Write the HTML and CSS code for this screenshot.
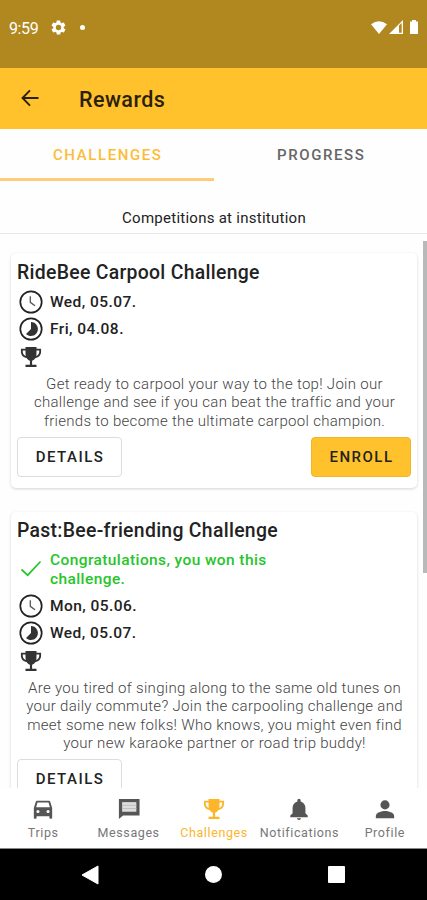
FILE: index.html
```html
<!DOCTYPE html>
<html lang="en">

<head>
  <meta charset="UTF-8">
  <title>Rewards</title>
  <link rel="stylesheet" href="styles.css">
</head>

<body>
  <!-- Shared icons -->
  <svg class="symbols">
    <symbol id="clock" viewBox="0 0 24 24">
      <circle cx="12" cy="12" r="10.7" fill="none" stroke="#222" stroke-width="1.7" />
      <path d="M11.3 6.3v6l4.7 3.5" fill="none" stroke="#555" stroke-width="1.3" />
    </symbol>
    <symbol id="timelapse" viewBox="0 0 24 24">
      <circle cx="12" cy="12" r="10.7" fill="none" stroke="#222" stroke-width="1.7" />
      <path d="M12 5a7 7 0 1 1-5 12L12 12z" fill="#333" />
    </symbol>
    <symbol id="trophy" viewBox="0 0 24 24">
      <path d="M6 1h12v2h5v3c0 4-2.500 6.500-6.200 7.200-1 1.500-2.200 2.500-3.600 2.800v4.500H18V23H6v-2.500h4.800V16c-1.400-.3-2.600-1.300-3.600-2.800C3.500 12.500 1 10 1 6V3h5zM6 5H3v1c0 2.400 1.200 4.100 3.300 4.900C6 9.500 6 7 6 5zM18 5c0 2 0 4.500-.3 5.900C19.800 10.100 21 8.400 21 6V5z" fill="currentColor" />
    </symbol>
  </svg>

  <div class="status-bar">
    <span class="time">9:59</span>
    <svg class="gear" viewBox="0 0 24 24"><path fill="#fff" fill-rule="evenodd" d="M19.400 13a7.500 7.500 0 0 0 0-2l2.100-1.600c.2-.2.200-.4.100-.6l-2-3.500c-.1-.2-.4-.3-.6-.2l-2.500 1a7 7 0 0 0-1.700-1l-.4-2.600A.5.500 0 0 0 14 2h-4c-.3 0-.5.200-.5.400l-.4 2.700a8 8 0 0 0-1.700 1l-2.500-1c-.2-.1-.5 0-.6.200l-2 3.500c-.1.200-.1.500.1.600L4.600 11a8 8 0 0 0 0 2l-2.200 1.600c-.2.200-.2.400-.1.600l2 3.500c.1.200.4.300.6.200l2.500-1a7 7 0 0 0 1.700 1l.4 2.700c0 .2.200.4.500.4h4c.3 0 .5-.2.500-.4l.4-2.700a8 8 0 0 0 1.700-1l2.500 1c.2.100.5 0 .6-.2l2-3.500c.1-.2.100-.5-.1-.6zM12 15.800a3.800 3.800 0 1 1 0-7.600 3.800 3.800 0 0 1 0 7.600z" /></svg>
    <span class="dot"></span>
    <svg class="signals" viewBox="0 0 49 16" fill="#fff">
      <path d="M0 4.200Q8 -1.800 16 4.200L8 14z" />
      <path fill-rule="evenodd" d="M18 14L32 0v14zM28 5.500V12.800h2.700V3z" />
      <path d="M39 1.500h2V0h4v1.500h2V14h-8z" />
    </svg>
  </div>

  <div class="app-bar">
    <svg class="back" viewBox="0 0 18 18"><path d="M17.500 9H1.500M9 1.300L1.500 9 9 16.700" fill="none" stroke="#2b2108" stroke-width="1.900" /></svg>
    <h1>Rewards</h1>
  </div>

  <div class="tabs">
    <div class="tab active">CHALLENGES</div>
    <div class="tab">PROGRESS</div>
  </div>

  <h2 class="heading">Competitions at institution</h2>

  <div class="content">
    <div class="card">
      <h3>RideBee Carpool Challenge</h3>
      <div class="row"><svg><use href="#clock" /></svg><span>Wed, 05.07.</span></div>
      <div class="row"><svg><use href="#timelapse" /></svg><span>Fri, 04.08.</span></div>
      <div class="row prize"><svg><use href="#trophy" /></svg></div>
      <p>Get ready to carpool your way to the top! Join our<br>challenge and see if you can beat the traffic and your<br>friends to become the ultimate carpool champion.</p>
      <div class="actions">
        <button>DETAILS</button>
        <button class="primary">ENROLL</button>
      </div>
    </div>

    <div class="card">
      <h3>Past:Bee-friending Challenge</h3>
      <div class="row won">
        <svg viewBox="0 0 24 24"><path d="M2.500 12.500l6.200 5.700L21.500 4.500" fill="none" stroke="#27c52b" stroke-width="1.700" /></svg>
        <span>Congratulations, you won this<br>challenge.</span>
      </div>
      <div class="row"><svg><use href="#clock" /></svg><span>Mon, 05.06.</span></div>
      <div class="row"><svg><use href="#timelapse" /></svg><span>Wed, 05.07.</span></div>
      <div class="row prize"><svg><use href="#trophy" /></svg></div>
      <p>Are you tired of singing along to the same old tunes on<br>your daily commute? Join the carpooling challenge and<br>meet some new folks! Who knows, you might even find<br>your new karaoke partner or road trip buddy!</p>
      <div class="actions">
        <button>DETAILS</button>
      </div>
    </div>
    <div class="scrollbar"></div>
  </div>

  <div class="bottom-nav">
    <div class="item">
      <svg viewBox="0 0 24 24"><path fill="currentColor" fill-rule="evenodd" d="M5.500 3h13c.7 0 1.200.4 1.400 1L22 11v10.500c0 .6-.4 1-1 1h-1c-.6 0-1-.4-1-1V20H5v1.500c0 .6-.4 1-1 1H3c-.6 0-1-.4-1-1V11l2.100-7c.2-.6.700-1 1.400-1zM6 5l-1.500 5h15L18 5zM6.500 13a1.700 1.700 0 1 0 0 3.400 1.700 1.700 0 0 0 0-3.400zm11 0a1.700 1.700 0 1 0 0 3.400 1.700 1.700 0 0 0 0-3.400z" /></svg>
      <span>Trips</span>
    </div>
    <div class="item">
      <svg viewBox="0 0 24 24"><path d="M1 23V1h22.500v18H5.500z" fill="currentColor" /><path d="M4.500 4.500h15.500v10.500h-15.500z" fill="#ddd" /><path d="M4.500 8h15.500M4.500 11.500h15.500" stroke="#bbb" /></svg>
      <span>Messages</span>
    </div>
    <div class="item active">
      <svg><use href="#trophy" /></svg>
      <span>Challenges</span>
    </div>
    <div class="item">
      <svg viewBox="0 0 24 24"><path fill="currentColor" d="M12 24a2.300 2.300 0 0 0 2.300-2H9.700A2.300 2.300 0 0 0 12 24zM19 16.500V11c0-3.600-1.800-6.500-5.200-7.300V2.500a1.800 1.800 0 0 0-3.600 0v1.200C6.800 4.500 5 7.400 5 11v5.500L2.500 19v2h19v-2z" /></svg>
      <span>Notifications</span>
    </div>
    <div class="item">
      <svg viewBox="0 0 24 24"><circle cx="12" cy="7.500" r="5" fill="currentColor" /><path d="M2 22v-2.500C2 16 8.500 14.300 12 14.300S22 16 22 19.500V22z" fill="currentColor" /></svg>
      <span>Profile</span>
    </div>
  </div>

  <div class="system-nav">
    <svg viewBox="0 0 18 20"><path d="M17 1v18L1 10z" fill="#fff" stroke="#fff" stroke-linejoin="round" /></svg>
    <div class="home"></div>
    <div class="recent"></div>
  </div>
</body>

</html>
```

FILE: styles.css
```css
* {
  box-sizing: border-box;
}

body {
  margin: 0;
  height: 900px;
  display: flex;
  flex-direction: column;
  overflow: hidden;
  background: #fefefe;
  color: #222;
  font-family: Roboto, sans-serif;
  white-space: nowrap;
}

h1,
h2,
h3,
p {
  margin: 0;
}

.symbols {
  display: none;
}

.status-bar {
  height: 68px;
  flex: none;
  display: flex;
  align-items: center;
  padding: 0 7px 13px 9px;
  background: #b18820;
  color: #fff;
}

.time {
  width: 41px;
  padding-top: 1px;
  font-size: 16px;
  letter-spacing: -0.4px;
}

.gear {
  width: 17px;
  height: 17px;
}

.dot {
  width: 5px;
  height: 5px;
  margin-left: 13px;
  border-radius: 50%;
  background: #fff;
}

.signals {
  width: 49px;
  height: 16px;
  margin-left: auto;
}

.app-bar {
  height: 61px;
  flex: none;
  display: flex;
  align-items: center;
  padding-left: 21px;
  background: #ffc22c;
}

.back {
  width: 18px;
  height: 18px;
  margin-bottom: 2px;
}

h1 {
  margin-left: 40px;
  padding-top: 1px;
  color: #2b2108;
  font-size: 21.500px;
  font-weight: 500;
  letter-spacing: 0.45px;
}

.tabs {
  height: 52px;
  flex: none;
  display: flex;
}

.tab {
  flex: 1;
  border-bottom: 3px solid transparent;
  padding-left: 2px;
  color: #666;
  font-size: 15px;
  font-weight: 500;
  letter-spacing: 1.6px;
  line-height: 53px;
  text-align: center;
}

.tab.active {
  border-color: #ffca7c;
  color: #fbbd38;
}

.heading {
  height: 53px;
  flex: none;
  padding: 28px 0 0 1px;
  border-bottom: 1px solid #e8e8e8;
  font-size: 15px;
  font-weight: 400;
  letter-spacing: 0.26px;
  line-height: 18px;
  text-align: center;
}

.content {
  position: relative;
  flex: 1;
  min-height: 0;
  overflow: hidden;
  padding: 19px 10px 0 11px;
}

.card {
  height: 235px;
  margin-bottom: 24px;
  padding: 8px 6px;
  border-radius: 5px;
  background: #fff;
  box-shadow: 0 1px 3px rgba(0, 0, 0, 0.17);
}

.card + .card {
  height: 300px;
  padding-top: 7px;
}

h3 {
  font-size: 19.400px;
  font-weight: 500;
  letter-spacing: 0.3px;
  line-height: 24px;
  margin-bottom: 3px;
}

.row {
  height: 27.500px;
  display: flex;
  align-items: center;
  gap: 7px;
  padding-left: 2px;
  font-size: 15.500px;
  font-weight: 500;
  letter-spacing: 0.45px;
  line-height: 19px;
}

.row span {
  padding-top: 1px;
}

.row svg {
  width: 24px;
  height: 24px;
}

.row.prize {
  height: 27px;
  padding-left: 3px;
  color: #333;
}

.row.prize svg {
  width: 22px;
  height: 22px;
}

.row.won {
  height: 46px;
  letter-spacing: 0.4px;
  color: #27c52b;
}

p {
  padding: 5px 0 0 1px;
  color: #444;
  font-size: 15px;
  font-weight: 300;
  letter-spacing: 0.3px;
  line-height: 18.300px;
  text-align: center;
}

.actions {
  display: flex;
  justify-content: space-between;
  padding-top: 7px;
}

button {
  width: 105px;
  height: 40px;
  padding: 0 0 0 1px;
  border: 1px solid #ddd;
  border-radius: 4px;
  background: #fff;
  color: #222;
  font-family: inherit;
  font-size: 15px;
  font-weight: 500;
  letter-spacing: 1.500px;
}

button.primary {
  width: 100px;
  border-color: #f0b52b;
  background: #ffc22c;
}

.scrollbar {
  position: absolute;
  top: 7px;
  right: 0;
  width: 4px;
  height: 332px;
  background: #b9b9b9;
}

.bottom-nav {
  height: 61px;
  flex: none;
  display: flex;
  background: #fff;
  border-bottom: 1px solid #888;
}

.item {
  flex: 1;
  display: flex;
  flex-direction: column;
  align-items: center;
  padding: 10px 0 0 1px;
  color: #555;
}

.item svg {
  width: 22px;
  height: 22px;
}

.item span {
  margin-top: 5px;
  color: #777;
  font-size: 12.500px;
  letter-spacing: 0.6px;
  line-height: 16px;
}

.item.active,
.item.active span {
  color: #fdb52a;
}

.system-nav {
  height: 51px;
  flex: none;
  display: flex;
  align-items: center;
  gap: 106px;
  padding-left: 81px;
  background: #000;
}

.system-nav svg {
  width: 18px;
  height: 20px;
}

.home {
  width: 17px;
  height: 17px;
  border-radius: 50%;
  background: #fff;
}

.recent {
  width: 17px;
  height: 17px;
  border-radius: 1px;
  background: #fff;
}
```
